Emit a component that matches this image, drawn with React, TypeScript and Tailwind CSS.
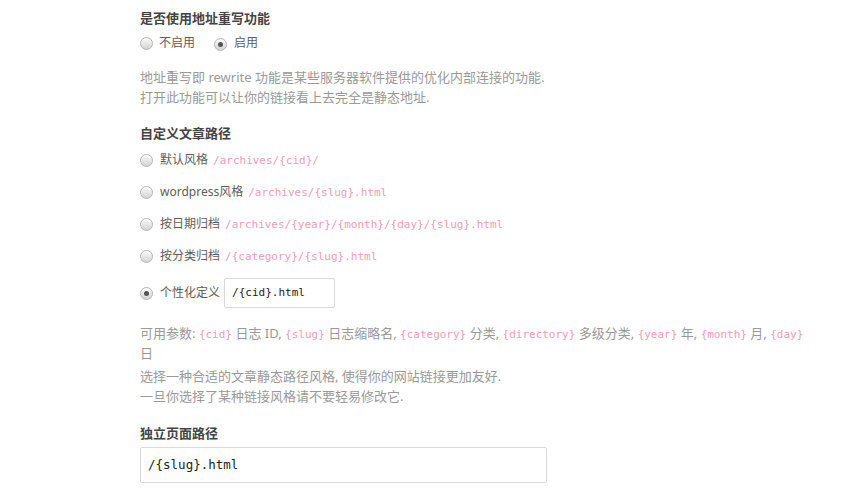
import React from "react";

const font = { fontFamily: '"Noto Sans", "Noto Sans CJK SC", sans-serif' };
const mono = '"DejaVu Sans Mono", "Liberation Mono", monospace';

function Radio({ checked }: { checked?: boolean }) {
  return (
    <span className="relative inline-flex h-[13px] w-[13px] shrink-0 items-center justify-center rounded-full border border-[#b4b4b4] bg-gradient-to-b from-[#fafafa] to-[#d4d4d4] shadow-[inset_0_1px_1px_rgba(255,255,255,0.8)]">
      {checked && <span className="h-[5px] w-[5px] rounded-full bg-[#555]" />}
    </span>
  );
}

function Code({ children }: { children: React.ReactNode }) {
  return (
    <span className="text-[11px] leading-none text-[#ee9db6]" style={{ fontFamily: mono }}>
      {children}
    </span>
  );
}

function Option({ label, code }: { label: string; code: string }) {
  return (
    <div className="flex h-5 items-center">
      <Radio />
      <span className="ml-[7px] text-[12px] leading-5 text-[#5d5d5d]">
        {label}
        <span className="ml-[5px]">
          <Code>{code}</Code>
        </span>
      </span>
    </div>
  );
}

export default function App() {
  return (
    <div className="min-h-[492px] w-[854px] bg-white pl-[140px]" style={font}>
      <div className="flex flex-col">
        <div className="mt-2 h-5 text-[13px] font-bold leading-5 text-[#444]">是否使用地址重写功能</div>
        <div className="mt-[5px] flex h-5 items-center text-[12px] text-[#5d5d5d]">
          <Radio />
          <span className="ml-[6px]">不启用</span>
          <span className="ml-[19px]">
            <Radio checked />
          </span>
          <span className="ml-[7px]">启用</span>
        </div>
        <div className="mt-[14px] text-[13px] leading-5 text-[#999]">
          <div>地址重写即 rewrite 功能是某些服务器软件提供的优化内部连接的功能.</div>
          <div>打开此功能可以让你的链接看上去完全是静态地址.</div>
        </div>

        <div className="mt-4 h-5 text-[13px] font-bold leading-5 text-[#444]">自定义文章路径</div>
        <div className="mt-[7px] flex flex-col gap-3">
          <Option label="默认风格" code="/archives/{cid}/" />
          <Option label="wordpress风格" code="/archives/{slug}.html" />
          <Option label="按日期归档" code="/archives/{year}/{month}/{day}/{slug}.html" />
          <Option label="按分类归档" code="/{category}/{slug}.html" />
        </div>
        <div className="mt-3 flex h-[30px] items-center">
          <Radio checked />
          <span className="ml-[7px] text-[12px] text-[#5d5d5d]">个性化定义</span>
          <div
            className="ml-[4px] flex h-[30px] w-[111px] items-center rounded-[2px] border border-[#d9d9d6] px-[7px] text-[11px] text-[#222]"
            style={{ fontFamily: mono }}
          >
            /{"{cid}"}.html
          </div>
        </div>
        <div className="mt-[15px] w-[680px] text-[13px] leading-5 text-[#999]">
          <div>
            可用参数: <Code>{"{cid}"}</Code> 日志 ID, <Code>{"{slug}"}</Code> 日志缩略名, <Code>{"{category}"}</Code> 分类,{" "}
            <Code>{"{directory}"}</Code> 多级分类, <Code>{"{year}"}</Code> 年, <Code>{"{month}"}</Code> 月,{" "}
            <Code>{"{day}"}</Code>
            <br />日
          </div>
          <div className="mt-[3px]">选择一种合适的文章静态路径风格, 使得你的网站链接更加友好.</div>
          <div>一旦你选择了某种链接风格请不要轻易修改它.</div>
        </div>

        <div className="mt-[17px] h-5 text-[13px] font-bold leading-5 text-[#444]">独立页面路径</div>
        <div
          className="mt-1 flex h-[36px] w-[407px] items-center rounded-[2px] border border-[#d9d9d6] px-[7px] text-[12.5px] text-[#222]"
          style={{ fontFamily: mono }}
        >
          /{"{slug}"}.html
        </div>
      </div>
    </div>
  );
}
